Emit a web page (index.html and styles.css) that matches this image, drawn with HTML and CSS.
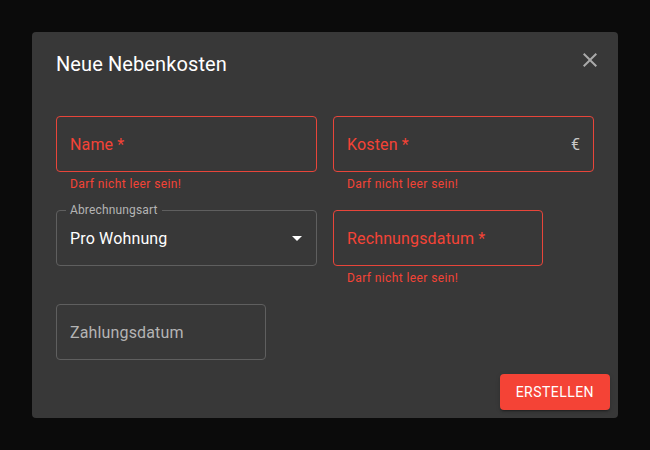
FILE: index.html
```html
<!DOCTYPE html>
<html lang="de">
<head>
<meta charset="utf-8">
<link rel="stylesheet" href="styles.css">
</head>
<body>
<div class="backdrop">
  <div class="dialog">
    <div class="title-row">
      <h2 class="title">Neue Nebenkosten</h2>
      <button class="close" aria-label="close">
        <svg viewBox="0 0 24 24" width="24" height="24"><path fill="currentColor" d="M19 6.41 17.59 5 12 10.59 6.41 5 5 6.41 10.59 12 5 17.59 6.41 19 12 13.41 17.59 19 19 17.59 13.41 12z"/></svg>
      </button>
    </div>
    <div class="content">
      <div class="row">
        <div class="field half">
          <div class="box error"><span class="label">Name *</span></div>
          <div class="helper">Darf nicht leer sein!</div>
        </div>
        <div class="field half">
          <div class="box error"><span class="label">Kosten *</span><span class="adorn">€</span></div>
          <div class="helper">Darf nicht leer sein!</div>
        </div>
      </div>
      <div class="row">
        <div class="field half">
          <div class="box select">
            <span class="legend">Abrechnungsart</span>
            <span class="value">Pro Wohnung</span>
            <svg class="arrow" viewBox="0 0 24 24" width="24" height="24"><path fill="currentColor" d="M7 10l5 5 5-5z"/></svg>
          </div>
        </div>
        <div class="field narrow">
          <div class="box error"><span class="label">Rechnungsdatum *</span></div>
          <div class="helper">Darf nicht leer sein!</div>
        </div>
      </div>
      <div class="row last">
        <div class="field narrow">
          <div class="box plain"><span class="label">Zahlungsdatum</span></div>
        </div>
      </div>
    </div>
    <div class="actions">
      <button class="btn">Erstellen</button>
    </div>
  </div>
</div>
</body>
</html>
```
FILE: styles.css
```css
* { box-sizing: border-box; }
html, body { margin: 0; padding: 0; }
body {
  width: 650px;
  height: 450px;
  background: #0b0b0b;
  font-family: Roboto, "Liberation Sans", sans-serif;
  overflow: hidden;
}
.backdrop {
  width: 650px;
  height: 450px;
  padding: 32px;
}
.dialog {
  width: 586px;
  height: 386px;
  background: #383838;
  border-radius: 4px;
  display: flex;
  flex-direction: column;
}
.title-row {
  display: flex;
  justify-content: space-between;
  align-items: flex-start;
  padding: 16px 16px 16px 24px;
}
.title {
  margin: 0;
  font-size: 20px;
  font-weight: 400;
  line-height: 32px;
  color: #ffffff;
  letter-spacing: 0.1px;
}
.close {
  background: none;
  border: none;
  padding: 0;
  margin: 0;
  width: 24px;
  height: 24px;
  color: #a9a9a9;
  display: flex;
  cursor: pointer;
}
.content {
  padding: 20px 24px 0 24px;
  display: flex;
  flex-direction: column;
}
.row {
  display: flex;
  gap: 16px;
  height: 94px;
}
.row.last { height: 62px; }
.field { display: flex; flex-direction: column; }
.half { width: 261px; }
.narrow { width: 210px; }
.box {
  height: 56px;
  border-radius: 4px;
  border: 1px solid #5f5f5f;
  display: flex;
  align-items: center;
  padding: 0 13px;
  font-size: 16px;
  position: relative;
}
.box.error {
  border-color: #e8453a;
  color: #f44336;
}
.label { letter-spacing: 0.15px; }
.box.plain { color: #b4b4b4; }
.adorn {
  margin-left: auto;
  color: #c8c8c8;
  font-size: 16px;
}
.helper {
  margin: 2px 0 0 14px;
  font-size: 12px;
  line-height: 20px;
  color: #f44336;
  letter-spacing: 0.4px;
}
.box.select { color: #ffffff; }
.legend {
  position: absolute;
  top: -9px;
  left: 9px;
  padding: 0 4px;
  background: #383838;
  font-size: 12px;
  line-height: 16px;
  color: #b4b4b4;
  letter-spacing: 0.15px;
}
.value { letter-spacing: 0.15px; }
.arrow {
  margin-left: auto;
  margin-right: -6px;
  color: #ffffff;
}
.actions {
  margin-top: auto;
  display: flex;
  justify-content: flex-end;
  padding: 8px;
}
.btn {
  height: 36px;
  padding: 0 16px;
  background: #f44336;
  color: #ffffff;
  border: none;
  border-radius: 4px;
  font-family: Roboto, "Liberation Sans", sans-serif;
  font-weight: 400;
  font-size: 14px;
  letter-spacing: 0.45px;
  text-transform: uppercase;
  box-shadow: 0 3px 1px -2px rgba(0,0,0,0.2), 0 2px 2px 0 rgba(0,0,0,0.14), 0 1px 5px 0 rgba(0,0,0,0.12);
}
```
